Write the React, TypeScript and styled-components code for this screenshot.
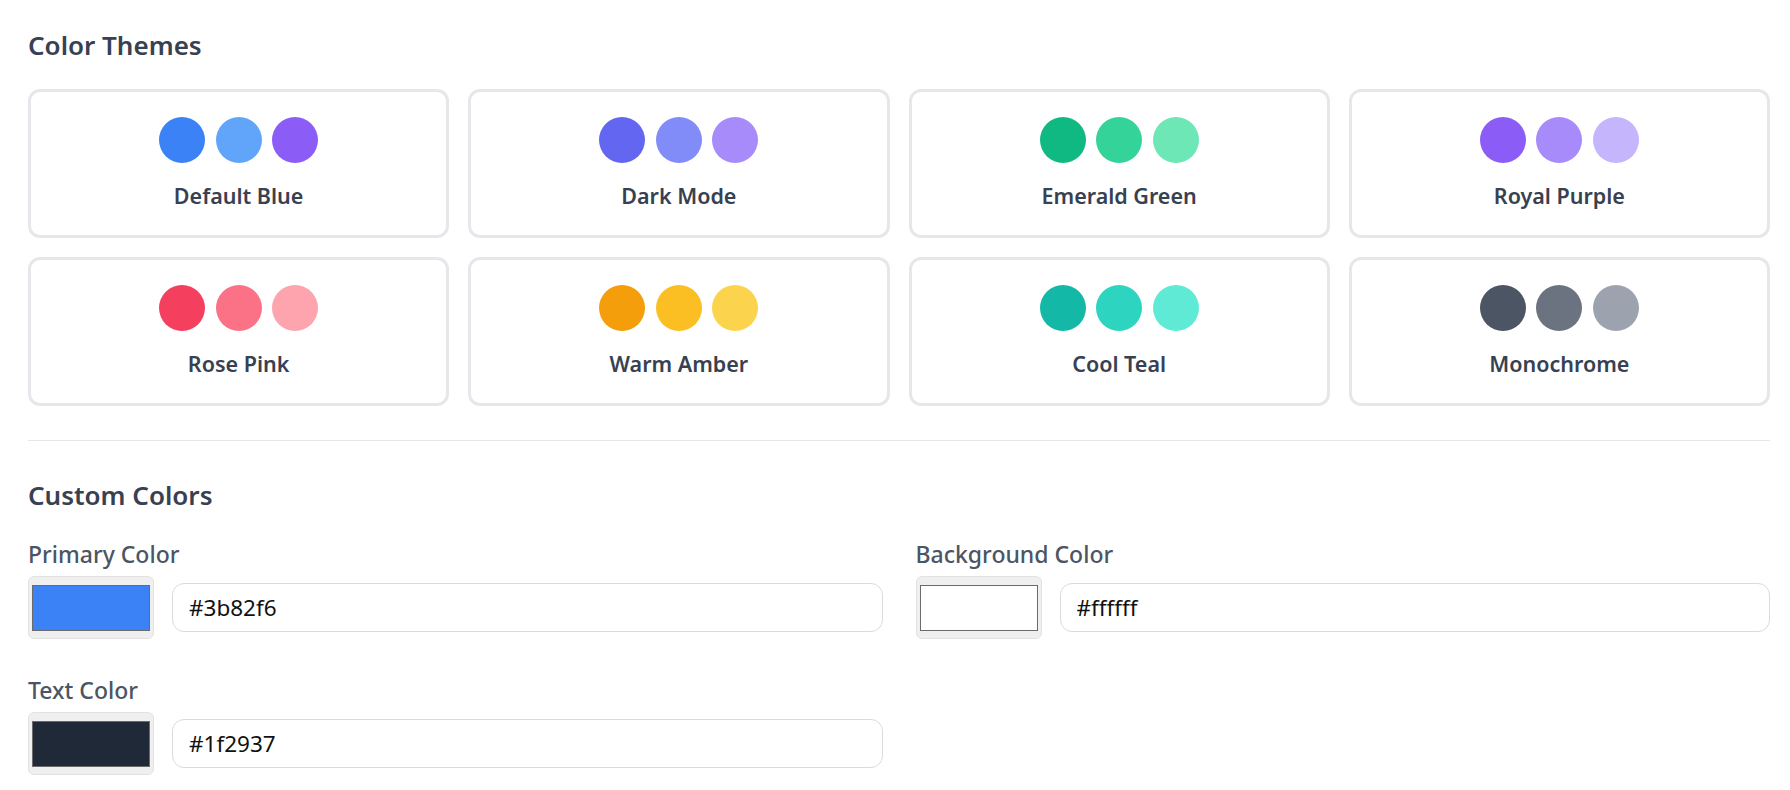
import React from "react";
import styled, { createGlobalStyle } from "styled-components";

const GlobalStyle = createGlobalStyle`
  * {
    box-sizing: border-box;
  }

  body {
    margin: 0;
    background: #ffffff;
    font-family: "Noto Sans", "Open Sans", Arial, sans-serif;
  }
`;

const Page = styled.main`
  padding: 24px 20px 24px 28px;
`;

const SectionTitle = styled.h2`
  margin: 0 0 23px;
  font-size: 26px;
  line-height: 42px;
  font-weight: 600;
  color: #374151;
`;

const ThemeGrid = styled.div`
  display: grid;
  grid-template-columns: repeat(4, 1fr);
  gap: 19px;
`;

const ThemeCard = styled.button`
  display: flex;
  flex-direction: column;
  align-items: center;
  gap: 17px;
  padding: 25px 24px;
  background: #ffffff;
  border: 3px solid #e5e7eb;
  border-radius: 12px;
  font-family: inherit;
  cursor: pointer;
`;

const Dots = styled.div`
  display: flex;
  gap: 10.5px;
`;

const Dot = styled.span<{ $color: string }>`
  width: 46px;
  height: 46px;
  border-radius: 50%;
  background: ${(p) => p.$color};
`;

const ThemeName = styled.span`
  font-size: 21.5px;
  line-height: 30px;
  font-weight: 600;
  color: #374151;
  transform: translateY(1px);
`;

const Divider = styled.hr`
  margin: 34px 0 33px;
  border: none;
  border-top: 1.5px solid #e5e7eb;
`;

const FieldGrid = styled.div`
  display: grid;
  grid-template-columns: repeat(2, 1fr);
  column-gap: 33px;
  row-gap: 33px;
  margin-top: -3px;
`;

const Field = styled.div`
  display: flex;
  flex-direction: column;
  gap: 4px;
`;

const FieldLabel = styled.label`
  font-size: 23px;
  line-height: 36px;
  font-weight: 500;
  color: #4b5563;
`;

const FieldRow = styled.div`
  display: flex;
  align-items: center;
  gap: 18px;
`;

const Swatch = styled.input.attrs({ type: "color" })`
  -webkit-appearance: none;
  appearance: none;
  flex-shrink: 0;
  width: 126px;
  height: 63px;
  padding: 0;
  background: #efefef;
  border: 1.5px solid #e2e2e2;
  border-radius: 6px;
  cursor: pointer;

  &::-webkit-color-swatch-wrapper {
    padding: 7.5px 3px;
  }

  &::-webkit-color-swatch {
    border: 1.5px solid #6b6b6b;
    border-radius: 0;
  }
`;

const HexInput = styled.input`
  flex: 1;
  min-width: 0;
  height: 49px;
  padding: 0 16px;
  border: 1.5px solid #d9dbe0;
  border-radius: 12px;
  font-family: inherit;
  font-size: 22.5px;
  color: #111111;
  outline: none;
`;

const themes = [
  { name: "Default Blue", colors: ["#3b82f6", "#60a5fa", "#8b5cf6"] },
  { name: "Dark Mode", colors: ["#6366f1", "#818cf8", "#a78bfa"] },
  { name: "Emerald Green", colors: ["#10b981", "#34d399", "#6ee7b7"] },
  { name: "Royal Purple", colors: ["#8b5cf6", "#a78bfa", "#c4b5fd"] },
  { name: "Rose Pink", colors: ["#f43f5e", "#fb7185", "#fda4af"] },
  { name: "Warm Amber", colors: ["#f59e0b", "#fbbf24", "#fcd34d"] },
  { name: "Cool Teal", colors: ["#14b8a6", "#2dd4bf", "#5eead4"] },
  { name: "Monochrome", colors: ["#4b5563", "#6b7280", "#9ca3af"] },
];

const customColors = [
  { id: "primary", label: "Primary Color", value: "#3b82f6" },
  { id: "background", label: "Background Color", value: "#ffffff" },
  { id: "text", label: "Text Color", value: "#1f2937" },
];

export default function App() {
  return (
    <>
      <GlobalStyle />
      <Page>
        <section>
          <SectionTitle>Color Themes</SectionTitle>
          <ThemeGrid>
            {themes.map((t) => (
              <ThemeCard key={t.name} type="button">
                <Dots>
                  {t.colors.map((c) => (
                    <Dot key={c} $color={c} />
                  ))}
                </Dots>
                <ThemeName>{t.name}</ThemeName>
              </ThemeCard>
            ))}
          </ThemeGrid>
        </section>

        <Divider />

        <section>
          <SectionTitle>Custom Colors</SectionTitle>
          <FieldGrid>
            {customColors.map((f) => (
              <Field key={f.id}>
                <FieldLabel htmlFor={f.id}>{f.label}</FieldLabel>
                <FieldRow>
                  <Swatch id={f.id} defaultValue={f.value} />
                  <HexInput type="text" defaultValue={f.value} />
                </FieldRow>
              </Field>
            ))}
          </FieldGrid>
        </section>
      </Page>
    </>
  );
}
